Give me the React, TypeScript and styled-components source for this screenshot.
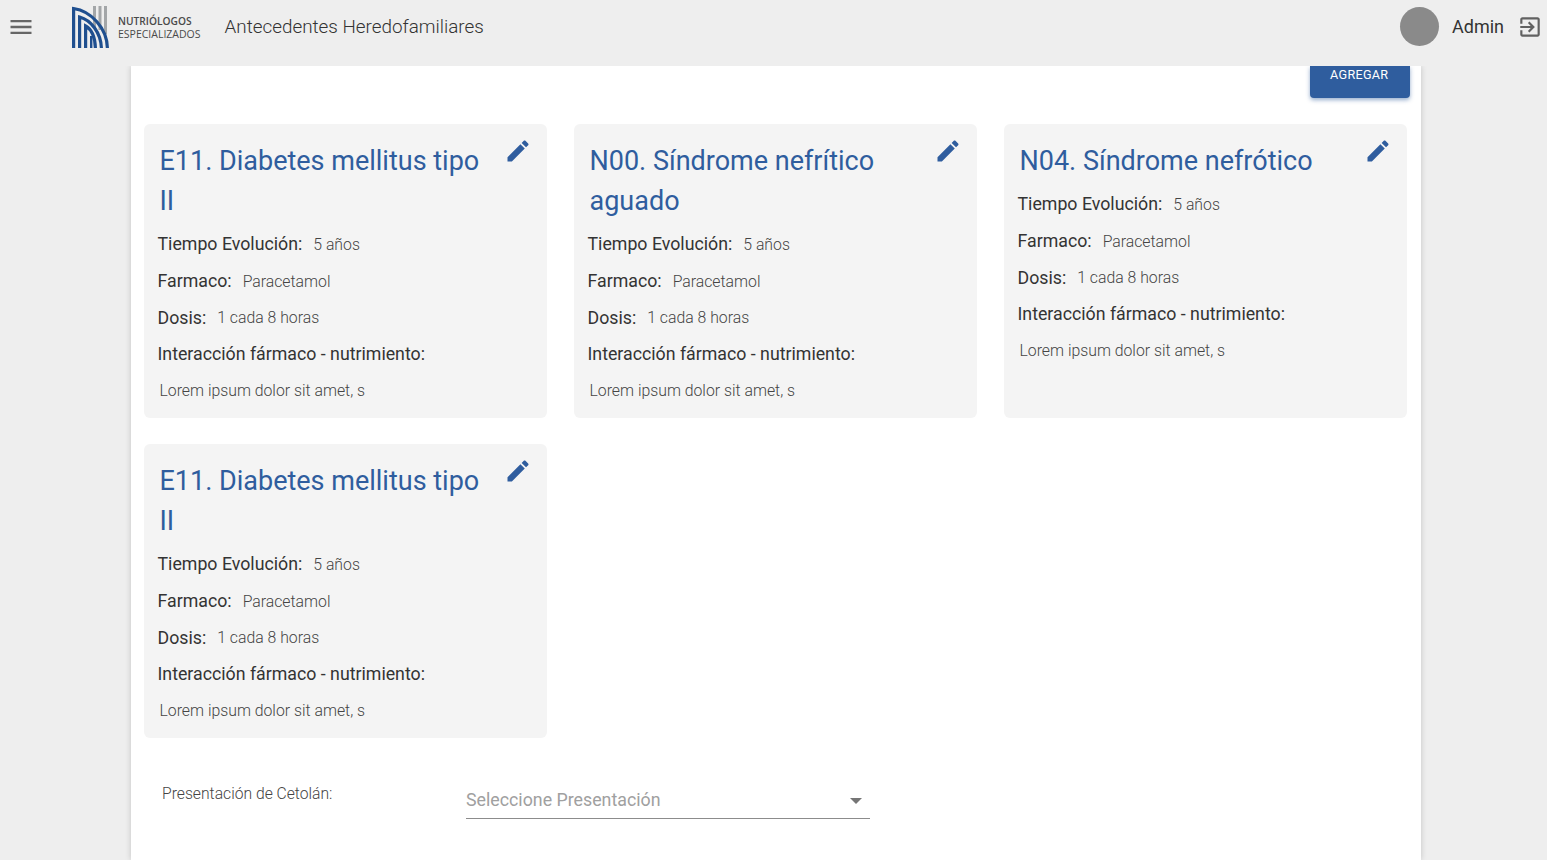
import styled, { createGlobalStyle } from "styled-components";

const BLUE = "#2f5d9e";

const GlobalStyle = createGlobalStyle`
  html, body {
    margin: 0;
    height: 860px;
    overflow: hidden;
    background: #eeeeee;
    font-family: Roboto, "Liberation Sans", sans-serif;
  }
  * {
    box-sizing: border-box;
  }
`;

const cards = [
  { id: 1, title: "E11. Diabetes mellitus tipo II" },
  { id: 2, title: "N00. Síndrome nefrítico aguado" },
  { id: 3, title: "N04. Síndrome nefrótico" },
  { id: 4, title: "E11. Diabetes mellitus tipo II" },
];

function Logo() {
  return (
    <svg width="37" height="42" viewBox="0 0 37 42">
      <g fill="#a3a6a8">
        <rect x="21" y="0" width="3" height="22" />
        <rect x="26.5" y="0" width="3" height="24" />
        <rect x="32" y="0" width="3" height="28" />
      </g>
      <g fill="none" stroke="#1f4f8f" strokeWidth="3.2">
        <path d="M1.6 42V2.5C19 5 35 22 35.4 42" />
        <path d="M7.6 42V11C19 14 29 27 29.4 42" />
        <path d="M13.6 42V20C19 23 23 31 23.4 42" />
      </g>
      <rect x="18" y="30" width="2.4" height="12" fill="#1f4f8f" />
    </svg>
  );
}

export default function App() {
  return (
    <Page>
      <GlobalStyle />
      <Header>
        <MenuIcon viewBox="0 0 24 24">
          <path d="M3 18h18v-2H3v2zm0-5h18v-2H3v2zm0-7v2h18V6H3z" />
        </MenuIcon>
        <LogoWrap>
          <Logo />
          <LogoText>
            <LogoStrong>NUTRIÓLOGOS</LogoStrong>
            <LogoLight>ESPECIALIZADOS</LogoLight>
          </LogoText>
        </LogoWrap>
        <PageTitle>Antecedentes Heredofamiliares</PageTitle>
        <UserArea>
          <Avatar />
          <UserName>Admin</UserName>
          <ExitIcon viewBox="0 0 24 24">
            <path d="M10.09 15.59L11.5 17l5-5-5-5-1.41 1.41L12.67 11H3v2h9.67l-2.58 2.59zM19 3H5c-1.11 0-2 .9-2 2v4h2V5h14v14H5v-4H3v4c0 1.1.89 2 2 2h14c1.1 0 2-.9 2-2V5c0-1.1-.9-2-2-2z" />
          </ExitIcon>
        </UserArea>
      </Header>
      <Sheet>
        <Toolbar>
          <AddButton>AGREGAR</AddButton>
        </Toolbar>
        <CardGrid>
          {cards.map((card) => (
            <Card key={card.id}>
              <CardHead>
                <CardTitle>{card.title}</CardTitle>
                <EditIcon viewBox="0 0 24 24">
                  <path d="M3 17.25V21h3.75L17.81 9.94l-3.75-3.75L3 17.25zM20.71 7.04c.39-.39.39-1.02 0-1.41l-2.34-2.34c-.39-.39-1.02-.39-1.41 0l-1.83 1.83 3.75 3.75 1.83-1.83z" />
                </EditIcon>
              </CardHead>
              <Field>
                <Label>Tiempo Evolución:</Label>
                <Value>5 años</Value>
              </Field>
              <Field>
                <Label>Farmaco:</Label>
                <Value>Paracetamol</Value>
              </Field>
              <Field>
                <Label>Dosis:</Label>
                <Value>1 cada 8 horas</Value>
              </Field>
              <Field>
                <Label>Interacción fármaco - nutrimiento:</Label>
              </Field>
              <Note>Lorem ipsum dolor sit amet, s</Note>
            </Card>
          ))}
        </CardGrid>
        <SelectRow>
          <SelectLabel>Presentación de Cetolán:</SelectLabel>
          <SelectBox>
            <Placeholder>Seleccione Presentación</Placeholder>
            <Caret />
          </SelectBox>
        </SelectRow>
      </Sheet>
    </Page>
  );
}

const Page = styled.div`
  height: 860px;
  display: flex;
  flex-direction: column;
  overflow: hidden;
`;

const Header = styled.header`
  height: 66px;
  flex: none;
  display: flex;
  align-items: center;
  padding: 0 4px 13px 7px;
  background: #eeeeee;
  position: relative;
  z-index: 1;
`;

const MenuIcon = styled.svg`
  width: 28px;
  height: 28px;
  fill: #666666;
`;

const LogoWrap = styled.div`
  display: flex;
  align-items: center;
  gap: 9px;
  margin-left: 37px;
  margin-top: 1px;
`;

const LogoText = styled.div`
  display: flex;
  flex-direction: column;
  padding-top: 2px;
  font-family: "Open Sans", sans-serif;
  font-size: 10.5px;
  line-height: 13px;
  color: #4a4a4a;
`;

const LogoStrong = styled.span`
  font-size: 10.2px;
  font-weight: 600;
`;

const LogoLight = styled.span`
  font-weight: 400;
`;

const PageTitle = styled.h1`
  margin: 0 0 0 24px;
  font-size: 18.85px;
  font-weight: 300;
  color: #333333;
`;

const UserArea = styled.div`
  margin-left: auto;
  display: flex;
  align-items: center;
`;

const Avatar = styled.div`
  width: 39px;
  height: 39px;
  border-radius: 50%;
  background: #8a8a8a;
`;

const UserName = styled.span`
  margin-left: 13px;
  font-size: 18px;
  font-weight: 400;
  color: #333333;
`;

const ExitIcon = styled.svg`
  width: 26px;
  height: 26px;
  margin-left: 13px;
  fill: #616161;
`;

const Sheet = styled.main`
  flex: 1;
  width: 1290px;
  margin-left: 131px;
  padding: 0 14px 0 13px;
  background: #ffffff;
  box-shadow: 0 0 6px rgba(0, 0, 0, 0.18);
`;

const Toolbar = styled.div`
  height: 58px;
  display: flex;
  justify-content: flex-end;
`;

const AddButton = styled.button`
  width: 100.5px;
  height: 32px;
  margin-right: -3px;
  padding: 0 1px 16px 0;
  border: 0;
  border-radius: 0 0 4px 4px;
  background: ${BLUE};
  color: #ffffff;
  font-family: inherit;
  font-size: 12.6px;
  letter-spacing: 0.3px;
  box-shadow: 0 2px 4px rgba(47, 93, 158, 0.5);
`;

const CardGrid = styled.div`
  display: grid;
  grid-template-columns: repeat(3, 403px);
  grid-auto-rows: 294px;
  column-gap: 27px;
  row-gap: 26px;
`;

const Card = styled.article`
  padding: 16px 16px 0 13.5px;
  background: #f4f4f4;
  border-radius: 6px;
`;

const CardHead = styled.div`
  display: flex;
  justify-content: space-between;
  align-items: flex-start;
  padding-left: 2px;
  margin-bottom: 6px;
`;

const CardTitle = styled.h2`
  width: 330px;
  margin: 1px 0 -1px;
  font-size: 27px;
  line-height: 40px;
  font-weight: 400;
  color: ${BLUE};
`;

const EditIcon = styled.svg`
  width: 28px;
  height: 28px;
  flex: none;
  margin: -3.5px -1px 0 0;
  fill: ${BLUE};
`;

const Field = styled.div`
  height: 36.7px;
  display: flex;
  align-items: center;
  gap: 11px;
`;

const Label = styled.span`
  font-size: 17.75px;
  color: #333333;
`;

const Value = styled.span`
  font-size: 15.8px;
  font-weight: 300;
  color: #444444;
`;

const Note = styled.p`
  height: 35px;
  margin: 0;
  padding-left: 2px;
  display: flex;
  align-items: center;
  font-size: 15.8px;
  font-weight: 300;
  color: #444444;
`;

const SelectRow = styled.div`
  display: flex;
  align-items: flex-start;
  padding: 46px 0 0 18px;
`;

const SelectLabel = styled.span`
  width: 304px;
  font-size: 15.7px;
  font-weight: 300;
  color: #444444;
`;

const SelectBox = styled.div`
  width: 404px;
  height: 42px;
  margin-top: -7px;
  display: flex;
  align-items: center;
  justify-content: space-between;
  padding: 4px 8px 0 0;
  border-bottom: 1px solid #8c8c8c;
`;

const Placeholder = styled.span`
  font-size: 17.8px;
  font-weight: 400;
  color: #a0a0a0;
`;

const Caret = styled.span`
  width: 0;
  height: 0;
  margin-top: 2px;
  border-left: 6px solid transparent;
  border-right: 6px solid transparent;
  border-top: 6px solid #757575;
`;
